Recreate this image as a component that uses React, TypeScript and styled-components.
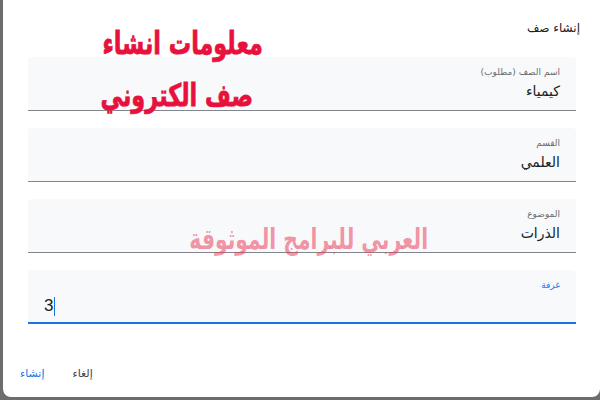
import React from 'react'
import styled, { createGlobalStyle } from 'styled-components'

const GlobalStyle = createGlobalStyle`
  html, body {
    margin: 0;
    padding: 0;
    background: #6d6d6d;
    width: 600px;
    height: 400px;
    overflow: hidden;
  }
`

const Dialog = styled.div`
  position: relative;
  box-sizing: border-box;
  margin-left: 3px;
  width: 597px;
  height: 397px;
  background: #fff;
  border-radius: 0 0 8px 8px;
  direction: rtl;
  font-family: 'DejaVu Sans', 'Liberation Sans', sans-serif;
  padding: 20px 24px 0 25px;
  display: flex;
  flex-direction: column;
`

const Title = styled.h2`
  margin: 0 -4px 0 0;
  font-size: 12px;
  font-weight: normal;
  color: #202124;
  height: 17px;
  line-height: 17px;
`

const Fields = styled.div`
  display: flex;
  flex-direction: column;
  gap: 17px;
  margin-top: 20px;
`

const Field = styled.div<{ $focused?: boolean }>`
  box-sizing: border-box;
  height: 54px;
  background: #f8f9fa;
  border-bottom: ${(p) => (p.$focused ? '2px solid #1a73e8' : '1px solid #80868b')};
  border-radius: 4px 4px 0 0;
  padding: 9px 16px 0 16px;
  display: flex;
  flex-direction: column;
`

const Label = styled.span<{ $focused?: boolean }>`
  font-size: 9px;
  line-height: 12px;
  color: ${(p) => (p.$focused ? '#1a73e8' : '#6b6e72')};
`

const Value = styled.span`
  font-size: 14px;
  line-height: 20px;
  margin-top: 3px;
  color: #202124;
`

const InputValue = styled.span`
  direction: ltr;
  align-self: flex-end;
  font-family: 'Liberation Sans', Arial, sans-serif;
  font-size: 17px;
  line-height: 20px;
  margin-top: 5px;
  color: #202124;
  display: flex;
  align-items: center;
`

const Caret = styled.span`
  display: inline-block;
  width: 1px;
  height: 19px;
  background: #1a73e8;
  margin-left: 1px;
`

const Actions = styled.div`
  margin-top: auto;
  margin-bottom: 17px;
  margin-left: -8px;
  display: flex;
  justify-content: flex-start;
  direction: ltr;
  gap: 28px;
`

const ActionButton = styled.button<{ $primary?: boolean }>`
  border: none;
  background: none;
  padding: 0;
  font-family: 'DejaVu Sans', sans-serif;
  font-size: 11px;
  color: ${(p) => (p.$primary ? '#1a73e8' : '#3c4043')};
  direction: rtl;
`

const Promo = styled.div<{ $top: number; $right: number }>`
  position: absolute;
  top: ${(p) => p.$top}px;
  right: ${(p) => p.$right}px;
  direction: rtl;
  font-family: 'DejaVu Sans', sans-serif;
  font-weight: bold;
  font-size: 31px;
  line-height: 36px;
  color: #e8103c;
  -webkit-text-stroke: 0.8px #e8103c;
  white-space: nowrap;
  transform: scaleX(0.72);
  transform-origin: right center;
`

const Watermark = styled.div`
  position: absolute;
  top: 221px;
  right: 172px;
  direction: rtl;
  font-family: 'DejaVu Sans', sans-serif;
  font-weight: bold;
  font-size: 29px;
  line-height: 36px;
  color: rgba(235, 60, 90, 0.55);
  white-space: nowrap;
  transform: scaleX(0.7);
  transform-origin: right center;
`

const App = () => {
  return (
    <>
      <GlobalStyle />
      <Dialog>
        <Title>إنشاء صف</Title>
        <Fields>
          <Field>
            <Label>اسم الصف (مطلوب)</Label>
            <Value>كيمياء</Value>
          </Field>
          <Field>
            <Label>القسم</Label>
            <Value>العلمي</Value>
          </Field>
          <Field>
            <Label>الموضوع</Label>
            <Value>الذرات</Value>
          </Field>
          <Field $focused>
            <Label $focused>غرفة</Label>
            <InputValue>
              3<Caret />
            </InputValue>
          </Field>
        </Fields>
        <Actions>
          <ActionButton $primary>إنشاء</ActionButton>
          <ActionButton>إلغاء</ActionButton>
        </Actions>
        <Promo $top={25} $right={337}>معلومات انشاء</Promo>
        <Promo $top={77} $right={347}>صف الكتروني</Promo>
        <Watermark>العربي للبرامج الموثوقة</Watermark>
      </Dialog>
    </>
  )
}

export default App
